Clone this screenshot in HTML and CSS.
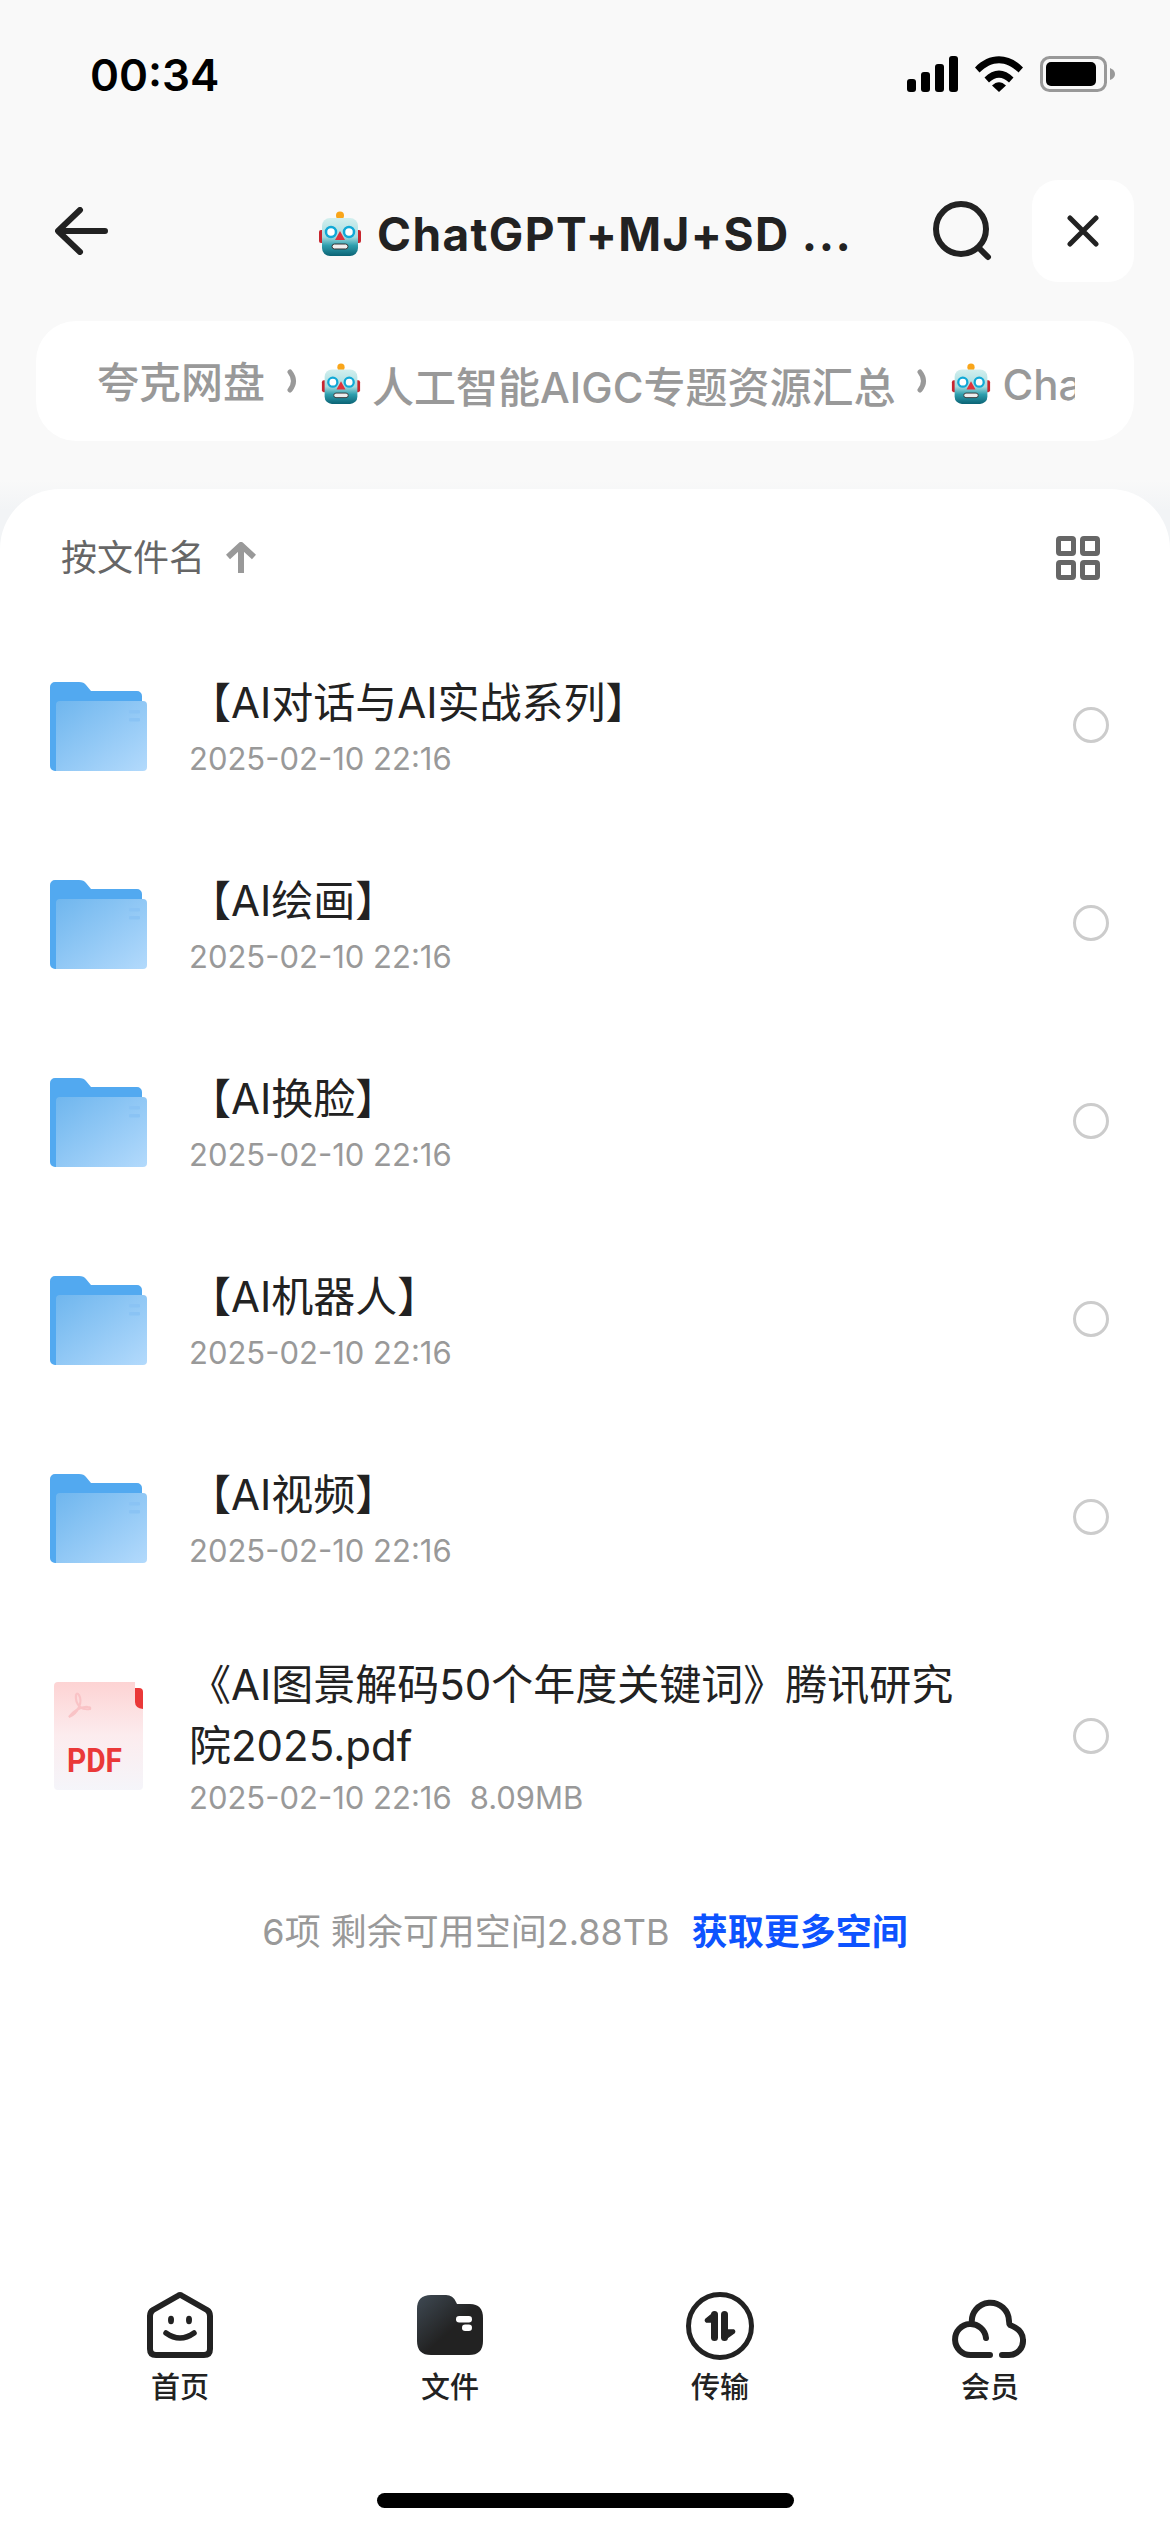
FILE: index.html
```html
<!DOCTYPE html>
<html lang="zh-CN">
<head>
<meta charset="utf-8">
<title>夸克网盘</title>
<link rel="stylesheet" href="styles.css">
</head>
<body>
<svg class="defs" width="0" height="0" aria-hidden="true">
  <defs>
    <linearGradient id="headGrad" x1="0" y1="0" x2="0" y2="1">
      <stop offset="0" stop-color="#d3efee"/><stop offset=".5" stop-color="#a5dcdf"/><stop offset=".72" stop-color="#2f9fae"/><stop offset="1" stop-color="#0b6375"/>
    </linearGradient>
    <linearGradient id="folderFront" x1="0" y1="0" x2="1" y2="1">
      <stop offset="0" stop-color="#6fb6ee"/><stop offset="1" stop-color="#b3dafc"/>
    </linearGradient>
    <linearGradient id="pdfPage" x1="0" y1="0" x2="0" y2="1">
      <stop offset="0" stop-color="#fdd3d3"/><stop offset=".5" stop-color="#fcecee"/><stop offset="1" stop-color="#f5f5fa"/>
    </linearGradient>
    <linearGradient id="navFolder" x1="0" y1="0" x2="1" y2="1">
      <stop offset="0" stop-color="#3f4a54"/><stop offset=".55" stop-color="#222"/><stop offset="1" stop-color="#222"/>
    </linearGradient>
    <symbol id="robot" viewBox="0 0 44 46">
      <rect x="1" y="19" width="6" height="13" rx="2" fill="#c8262f"/>
      <rect x="37" y="19" width="6" height="13" rx="2" fill="#c8262f"/>
      <circle cx="22" cy="4.500" r="4" fill="#f9a51a"/>
      <path d="M16 10q6-3 12 0v1H16z" fill="#6a4c93"/>
      <rect x="4" y="7" width="36" height="38" rx="8" fill="url(#headGrad)"/>
      <circle cx="13" cy="21" r="5" fill="#fff" stroke="#10a8d6" stroke-width="2.500"/>
      <circle cx="31" cy="21" r="5" fill="#fff" stroke="#10a8d6" stroke-width="2.500"/>
      <path d="M22 20l-5 9h10z" fill="#e0323c"/>
      <rect x="14" y="33" width="16" height="5" rx="2.500" fill="#eee" stroke="#333" stroke-width="1"/>
    </symbol>
    <symbol id="folder" viewBox="0 0 97 90">
      <path d="M0 6a5 5 0 0 1 5-5h24q5 0 7 3l5 6h46a5 5 0 0 1 5 5v75H5a5 5 0 0 1-5-5z" fill="#52a9f0"/>
      <path d="M6 24a4 4 0 0 1 4-4h83a4 4 0 0 1 4 4v62a4 4 0 0 1-4 4H6z" fill="url(#folderFront)"/>
      <rect x="79" y="29" width="11" height="3.500" rx="1" fill="#8ac3f4"/>
      <rect x="79" y="37" width="11" height="3.500" rx="1" fill="#8ac3f4"/>
    </symbol>
  </defs>
</svg>

<div class="status">
  <span class="time">00:34</span>
  <div class="status-icons">
    <svg class="sig" width="51" height="36" viewBox="0 0 51 36"><rect x="0" y="23" width="9" height="13" rx="3"/><rect x="14" y="16" width="9" height="20" rx="3"/><rect x="28" y="8" width="9" height="28" rx="3"/><rect x="42" y="0" width="9" height="36" rx="3"/></svg>
    <svg class="wifi" width="48" height="36" viewBox="0 0 48 36"><path d="M0 11.500C14-3.500 34-3.500 48 11.500l-4.500 5C31 4 17 4 4.500 16.500z"/><path d="M9.500 21.500c9-9.500 20-9.500 29 0l-4.500 5c-6.500-6.500-13.500-6.500-20 0z"/><path d="M17 29.500c4.500-4.500 9.500-4.500 14 0L24 36z"/></svg>
    <svg class="batt" width="75" height="36" viewBox="0 0 75 36"><rect x="1.500" y="1.500" width="64" height="33" rx="8" fill="none" stroke="#999" stroke-width="3"/><rect x="6" y="6" width="50" height="24" rx="5"/><path d="M70 12q5 2 5 6t-5 6z" fill="#999"/></svg>
  </div>
</div>

<header class="head">
  <svg class="back" width="53" height="48" viewBox="0 0 53 48"><path d="M50 24H5M25 3L3 24l22 21" fill="none" stroke="#222" stroke-width="6" stroke-linecap="round" stroke-linejoin="round"/></svg>
  <div class="title">
    <svg class="emoji-lg"><use href="#robot"/></svg>
    <span>ChatGPT+MJ+SD ...</span>
  </div>
  <svg class="search" width="60" height="60" viewBox="0 0 60 60"><circle cx="28" cy="28" r="25" fill="none" stroke="#222" stroke-width="6"/><path d="M46 47l9 9" stroke="#222" stroke-width="6" stroke-linecap="round"/></svg>
  <button class="close" type="button" aria-label="关闭"><svg width="32" height="32" viewBox="0 0 32 32"><path d="M3 3l26 26M29 3L3 29" stroke="#222" stroke-width="5" stroke-linecap="round"/></svg></button>
</header>

<nav class="crumbs">
  <div class="crumbs-in">
    <span class="crumb-root">夸克网盘</span>
    <svg class="chev" width="12" height="24" viewBox="0 0 12 24"><path d="M3 3q7 9 0 18" fill="none" stroke="#999" stroke-width="5" stroke-linecap="round"/></svg>
    <svg class="emoji-sm"><use href="#robot"/></svg>
    <span class="crumb">人工智能AIGC专题资源汇总</span>
    <svg class="chev" width="12" height="24" viewBox="0 0 12 24"><path d="M3 3q7 9 0 18" fill="none" stroke="#999" stroke-width="5" stroke-linecap="round"/></svg>
    <svg class="emoji-sm"><use href="#robot"/></svg>
    <span class="crumb">ChatGPT+MJ+SD</span>
  </div>
</nav>

<main class="sheet">
  <div class="sort">
    <span class="sort-label">按文件名</span>
    <svg class="sort-arrow" width="30" height="32" viewBox="0 0 30 32"><path d="M15 31V4M2 15L15 3l13 12" fill="none" stroke="#999" stroke-width="6" stroke-linejoin="round"/></svg>
    <svg class="grid-ic" width="44" height="44" viewBox="0 0 44 44"><g fill="none" stroke="#666" stroke-width="5"><rect x="2.500" y="2.500" width="15" height="15" rx="1.500"/><rect x="26.500" y="2.500" width="15" height="15" rx="1.500"/><rect x="2.500" y="26.500" width="15" height="15" rx="1.500"/><rect x="26.500" y="26.500" width="15" height="15" rx="1.500"/></g></svg>
  </div>

  <div class="row">
    <svg class="folder"><use href="#folder"/></svg>
    <div class="info single"><div class="name">【AI对话与AI实战系列】</div><div class="meta">2025-02-10 22:16</div></div>
    <span class="radio"></span>
  </div>
  <div class="row">
    <svg class="folder"><use href="#folder"/></svg>
    <div class="info single"><div class="name">【AI绘画】</div><div class="meta">2025-02-10 22:16</div></div>
    <span class="radio"></span>
  </div>
  <div class="row">
    <svg class="folder"><use href="#folder"/></svg>
    <div class="info single"><div class="name">【AI换脸】</div><div class="meta">2025-02-10 22:16</div></div>
    <span class="radio"></span>
  </div>
  <div class="row">
    <svg class="folder"><use href="#folder"/></svg>
    <div class="info single"><div class="name">【AI机器人】</div><div class="meta">2025-02-10 22:16</div></div>
    <span class="radio"></span>
  </div>
  <div class="row">
    <svg class="folder"><use href="#folder"/></svg>
    <div class="info single"><div class="name">【AI视频】</div><div class="meta">2025-02-10 22:16</div></div>
    <span class="radio"></span>
  </div>
  <div class="row row-tall">
    <svg class="pdf" width="90" height="108" viewBox="0 0 90 108">
      <path d="M4 0h77v14q0 6 8 7v83a4 4 0 0 1-4 4H4a4 4 0 0 1-4-4V4a4 4 0 0 1 4-4z" fill="url(#pdfPage)"/>
      <path d="M81 6h4a4 4 0 0 1 4 4v17q-8-1-8-7z" fill="#ea3838"/>
      <path d="M15 35q7-3 10-10t0-12q-2-3-3 0-1 7 4 12 4 3 10 2 1-2-2-2-10-1-19 10z" fill="none" stroke="#f9c3c6" stroke-width="2.200"/>
      <text class="pdf-text" x="13" y="90" textLength="55" lengthAdjust="spacingAndGlyphs">PDF</text>
    </svg>
    <div class="info"><div class="name">《AI图景解码50个年度关键词》腾讯研究院2025.pdf</div><div class="meta">2025-02-10 22:16<span class="size">8.09MB</span></div></div>
    <span class="radio"></span>
  </div>

  <div class="summary"><span class="sum-text">6项 剩余可用空间2.88TB</span><a class="sum-link">获取更多空间</a></div>

  <div class="tabs">
    <div class="tab">
      <svg class="tab-ic" width="80" height="70" viewBox="0 0 80 70"><path d="M38.500 5.500L13 20q-3 2-3 6v33q0 6 6 6h48q6 0 6-6V26q0-4-3-6L41.500 5.500q-1.500-1-3 0z" fill="none" stroke="#222" stroke-width="6" stroke-linejoin="round"/><ellipse cx="31" cy="30" rx="3" ry="4.200" fill="#222"/><ellipse cx="49" cy="30" rx="3" ry="4.200" fill="#222"/><path d="M26 43q14 10 28 0" fill="none" stroke="#222" stroke-width="5.500" stroke-linecap="round"/></svg>
      <span class="tab-label">首页</span>
    </div>
    <div class="tab">
      <svg class="tab-ic" width="80" height="70" viewBox="0 0 80 70"><path d="M7 19q0-14 14-14h15q7 0 10 7l1 2h13q13 0 13 14v23q0 14-14 14H21Q7 65 7 51z" fill="url(#navFolder)"/><rect x="46" y="26" width="16" height="6.500" rx="3.200" fill="#fff"/><rect x="52" y="34.500" width="10" height="6.500" rx="3.200" fill="#fff"/></svg>
      <span class="tab-label">文件</span>
    </div>
    <div class="tab">
      <svg class="tab-ic" width="80" height="70" viewBox="0 0 80 70"><circle cx="40" cy="36" r="31.500" fill="none" stroke="#222" stroke-width="5"/><rect x="31" y="21" width="7" height="30" rx="3.500" fill="#222"/><path d="M34 22.500L26 29q-1.500 2 .5 3H34z" fill="#222" stroke="#222" stroke-width="1.500" stroke-linejoin="round"/><rect x="41" y="21" width="7" height="30" rx="3.500" fill="#222"/><path d="M45 49.500L54 43q1.500-2-.5-3H45z" fill="#222" stroke="#222" stroke-width="1.500" stroke-linejoin="round"/></svg>
      <span class="tab-label">传输</span>
    </div>
    <div class="tab">
      <svg class="tab-ic" width="80" height="70" viewBox="0 0 80 70"><path d="M36 48A15.500 15.500 0 1 0 20.500 65H40M52 65h7a14 14 0 0 0 14-15q0-10-13-15-1-1-1-4A18.600 18.600 0 1 0 22 34" fill="none" stroke="#222" stroke-width="6" stroke-linecap="round"/></svg>
      <span class="tab-label">会员</span>
    </div>
  </div>
  <div class="home-bar"></div>
</main>
</body>
</html>
```

FILE: styles.css
```css
* { box-sizing: border-box; }
html, body { margin: 0; padding: 0; }
body {
  width: 1170px;
  height: 2532px;
  overflow: hidden;
  background: linear-gradient(#f9f9f9 0, #f9f9f9 480px, #f2f4f6 510px);
  display: flex;
  flex-direction: column;
  font-family: Inter, "Noto Sans CJK SC", sans-serif;
  color: #222;
}
.defs { position: absolute; }

.status {
  height: 180px;
  padding: 50px 55px 0 90px;
  display: flex;
  justify-content: space-between;
  align-items: flex-start;
}
.time { font-size: 44px; font-weight: 600; line-height: 50px; color: #000; }
.status-icons { display: flex; gap: 17px; padding-top: 6px; align-items: flex-start; }

.head {
  height: 102px;
  margin-bottom: 39px;
  padding: 0 36px 0 55px;
  display: flex;
  align-items: center;
}
.back { flex: none; }
.title {
  margin-left: 210px;
  padding-top: 6px;
  display: flex;
  align-items: center;
  gap: 15px;
  font-size: 46px;
  letter-spacing: 1.400px;
  font-weight: 700;
  color: #222;
  width: 615px;
  white-space: nowrap;
}
.emoji-lg { width: 44px; height: 46px; flex: none; }
.search { flex: none; margin-right: 39px; }
.close {
  width: 102px;
  height: 102px;
  border: 0;
  padding: 0;
  border-radius: 26px;
  background: #fff;
  display: flex;
  align-items: center;
  justify-content: center;
  flex: none;
}

.crumbs {
  height: 120px;
  margin: 0 36px 48px;
  padding: 6px 59px 0 61px;
  background: #fff;
  border-radius: 40px;
  display: flex;
  align-items: center;
}
.crumbs-in {
  width: 100%;
  overflow: hidden;
  display: flex;
  align-items: center;
  white-space: nowrap;
  font-size: 42px;
  font-weight: 500;
  color: #999;
}
.crumb-root { margin-bottom: 10px; flex: none; }
.crumb { flex: none; margin-left: 11px; }
.chev { flex: none; margin: 0 22px 6px 22px; }
.emoji-sm { width: 40px; height: 42px; flex: none; }

.sheet {
  flex: 1;
  background: #fff;
  border-radius: 60px 60px 0 0;
  display: flex;
  flex-direction: column;
  min-height: 0;
}
.sort {
  height: 137px;
  padding: 0 70px 0 61px;
  display: flex;
  align-items: center;
}
.sort-label { font-size: 36px; color: #666; line-height: 44px; }
.sort-arrow { margin-left: 21px; }
.grid-ic { margin-left: auto; }

.row {
  height: 198px;
  padding: 0 61px 0 50px;
  display: flex;
  align-items: center;
}
.row-tall { height: 240px; }
.folder { width: 97px; height: 90px; flex: none; margin-top: 2px; }
.pdf { flex: none; margin: 0 3px 0 4px; }
.pdf-text { font-family: Roboto, sans-serif; font-weight: 700; font-size: 34px; fill: #ea3838; }
.info { width: 790px; margin-left: 42px; }
.name { font-size: 42px; line-height: 61px; color: #222; padding-top: 2px; }
.single .name { margin-bottom: 4px; }
.meta { font-size: 31px; line-height: 44px; color: #999; }
.size { margin-left: 18px; }
.radio {
  width: 36px;
  height: 36px;
  margin-left: auto;
  flex: none;
  border: 3px solid #ccc;
  border-radius: 50%;
}

.summary {
  margin-top: 51px;
  display: flex;
  justify-content: center;
  gap: 22px;
  font-size: 36px;
  line-height: 50px;
}
.sum-text { color: #999; }
.sum-link { color: #0d53ff; font-weight: 700; }

.tabs {
  margin-top: auto;
  display: grid;
  grid-template-columns: repeat(4, 270px);
  padding: 0 45px;
}
.tab { display: flex; flex-direction: column; align-items: center; }
.tab-label { margin-top: 8px; font-size: 29px; line-height: 40px; color: #222; font-weight: 500; }
.home-bar {
  width: 417px;
  height: 15px;
  margin: 85px auto 24px;
  background: #000;
  border-radius: 8px;
}
```
